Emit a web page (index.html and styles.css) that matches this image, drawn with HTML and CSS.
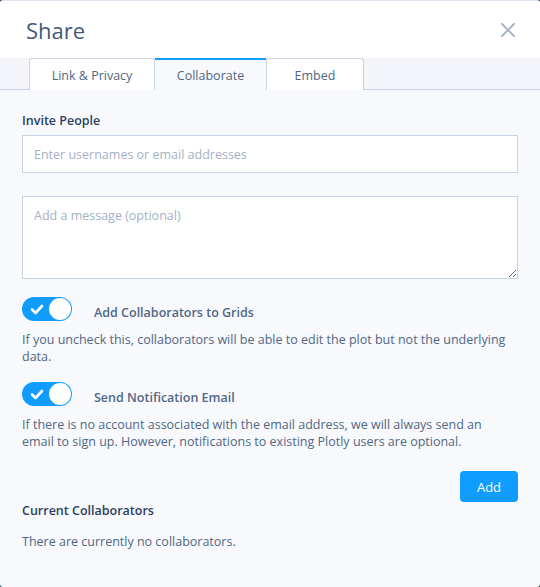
FILE: index.html
```html
<!DOCTYPE html>
<html>
<head>
<meta charset="utf-8">
<link rel="stylesheet" href="styles.css">
</head>
<body>
<div class="modal">
  <div class="header">
    <h1 class="title">Share</h1>
    <button class="close" aria-label="Close">
      <svg width="16" height="16" viewBox="0 0 16 16"><path d="M2 2L14 14M14 2L2 14" stroke="#a2b1c6" stroke-width="1.8" stroke-linecap="round"/></svg>
    </button>
  </div>
  <div class="tabs">
    <div class="tab">Link &amp; Privacy</div>
    <div class="tab active">Collaborate</div>
    <div class="tab">Embed</div>
  </div>
  <div class="content">
    <div class="label">Invite People</div>
    <input class="input" type="text" placeholder="Enter usernames or email addresses">
    <textarea class="textarea" placeholder="Add a message (optional)"></textarea>
    <div class="toggle-row">
      <span class="toggle"><svg class="check" width="14" height="11" viewBox="0 0 14 11"><path d="M2 5.5L5.5 9L12 2" fill="none" stroke="#fff" stroke-width="2.6" stroke-linecap="round" stroke-linejoin="round"/></svg><span class="knob"></span></span>
      <span class="toggle-label">Add Collaborators to Grids</span>
    </div>
    <p class="desc">If you uncheck this, collaborators will be able to edit the plot but not the underlying data.</p>
    <div class="toggle-row">
      <span class="toggle"><svg class="check" width="14" height="11" viewBox="0 0 14 11"><path d="M2 5.5L5.5 9L12 2" fill="none" stroke="#fff" stroke-width="2.6" stroke-linecap="round" stroke-linejoin="round"/></svg><span class="knob"></span></span>
      <span class="toggle-label">Send Notification Email</span>
    </div>
    <p class="desc">If there is no account associated with the email address, we will always send an email to sign up. However, notifications to existing Plotly users are optional.</p>
    <div class="actions"><button class="btn">Add</button></div>
    <div class="label current">Current Collaborators</div>
    <p class="empty">There are currently no collaborators.</p>
  </div>
</div>
</body>
</html>
```
FILE: styles.css
```css
* { box-sizing: border-box; }
html, body { margin: 0; padding: 0; }
body {
  width: 540px;
  height: 587px;
  background: #2a3f5f;
  font-family: "Open Sans", "Noto Sans", sans-serif;
  color: #506784;
  overflow: hidden;
}
.modal {
  width: 540px;
  height: 587px;
  background: #f8f9fc;
  border-top: 1px solid #dfe4ee;
  border-radius: 3px;
  overflow: hidden;
}
.header {
  background: #fff;
  height: 57px;
  display: flex;
  align-items: center;
  justify-content: space-between;
  padding: 0 24px 0 26px;
}
.title {
  margin: 0;
  font-size: 22px;
  font-weight: 400;
  color: #44577a;
  margin-top: 1px;
}
.close {
  border: 0;
  background: none;
  padding: 0;
  width: 16px;
  height: 16px;
  display: flex;
}
.tabs {
  display: flex;
  padding-left: 29px;
  height: 32px;
  background: #f3f5fa;
  border-bottom: 1px solid #c8d4e3;
}
.tab {
  height: 32px;
  display: flex;
  align-items: center;
  justify-content: center;
  font-size: 12.5px;
  color: #506784;
  background: #fff;
  border: 1px solid #c8d4e3;
  border-bottom: 0;
  border-radius: 3px 3px 0 0;
  padding-top: 1px;
}
.tab:nth-child(1) { width: 126px; }
.tab:nth-child(2) { width: 111px; }
.tab:nth-child(3) { width: 98px; }
.tab.active {
  background: #f8f9fc;
  border: 0;
  border-top: 2px solid #119dff;
  border-radius: 0;
  height: 33px;
  margin-bottom: -1px;
  padding-top: 0;
}
.content {
  padding: 22px 22px 0 22px;
}
.label {
  font-size: 12.5px;
  font-weight: 600;
  color: #2a3f5f;
  line-height: 17px;
  margin-bottom: 6px;
}
.input, .textarea {
  display: block;
  width: 496px;
  background: #fff;
  border: 1px solid #c8d4e3;
  border-radius: 0;
  font-family: inherit;
  font-size: 12.5px;
  color: #506784;
  padding: 0 11px;
  outline: none;
}
.input { height: 38px; }
.textarea {
  margin-top: 23px;
  height: 83px;
  padding-top: 10px;
  resize: vertical;
}
.input::placeholder, .textarea::placeholder { color: #a2b1c6; opacity: 1; }
.toggle-row {
  display: flex;
  align-items: center;
  margin-top: 18px;
  height: 24px;
}
.toggle {
  width: 50px;
  height: 24px;
  border-radius: 12px;
  background: #119dff;
  position: relative;
  display: inline-block;
  flex: none;
}
.check { position: absolute; left: 8px; top: 7px; }
.knob {
  position: absolute;
  right: 1px;
  top: 1px;
  width: 22px;
  height: 22px;
  border-radius: 50%;
  background: #fff;
}
.toggle-label {
  margin-left: 22px;
  padding-top: 6px;
  font-size: 12.5px;
  font-weight: 600;
  color: #506784;
}
.desc {
  margin: 10px 0 0 0;
  max-width: 490px;
  font-size: 12.5px;
  line-height: 17px;
  color: #506784;
}
.desc + .toggle-row { margin-top: 17px; }
.actions {
  display: flex;
  justify-content: flex-end;
  margin-top: 21px;
}
.btn {
  width: 58px;
  height: 31px;
  border: 0;
  border-radius: 4px;
  background: #119dff;
  color: #fff;
  font-family: inherit;
  font-size: 13px;
  padding: 0;
}
.label.current { margin-top: 0; margin-bottom: 0; }
.empty {
  margin: 14px 0 0 0;
  font-size: 12.5px;
  line-height: 17px;
  color: #506784;
}
```
